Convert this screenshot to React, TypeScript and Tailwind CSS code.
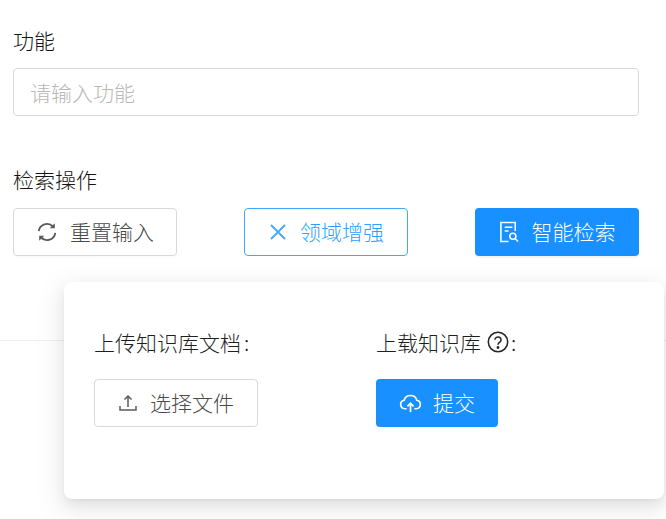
import React from "react";

const font = { fontFamily: '"Noto Sans CJK SC", "Noto Sans", sans-serif' };

function RefreshIcon() {
  return (
    <svg viewBox="0 0 24 24" className="h-[22px] w-[22px]" fill="none" stroke="#595959" strokeWidth="2">
      <path d="M3 11a9 9 0 0 1 15.5-5" />
      <path d="M21 13a9 9 0 0 1-15.5 5" />
      <path d="M20.5 2.5v5.5h-5.5z" fill="#595959" stroke="none" />
      <path d="M3.5 21.5v-5.5h5.5z" fill="#595959" stroke="none" />
    </svg>
  );
}

function CloseIcon() {
  return (
    <svg viewBox="0 0 20 20" className="h-5 w-5" fill="none" stroke="#40a9ff" strokeWidth="1.8">
      <path d="M3 3l14 14M17 3L3 17" />
    </svg>
  );
}

function FileSearchIcon() {
  return (
    <svg viewBox="0 0 22 24" className="h-6 w-[21px]" fill="none" stroke="#fff" strokeWidth="1.6">
      <path d="M10 22H2V2h15v9" />
      <path d="M6 7h8M6 11h4" />
      <circle cx="14.5" cy="16.5" r="3.2" />
      <path d="M17 19l3 3" />
    </svg>
  );
}

function UploadIcon() {
  return (
    <svg viewBox="0 0 20 20" className="h-5 w-5" fill="none" stroke="#595959" strokeWidth="1.5">
      <path d="M10 14V3.5" />
      <path d="M6.5 6.5L10 3l3.5 3.5" />
      <path d="M2 13v4h16v-4" />
    </svg>
  );
}

function CloudIcon() {
  return (
    <svg viewBox="0 0 24 22" className="h-[21px] w-[23px]" fill="none" stroke="#fff" strokeWidth="1.8">
      <path d="M8 16.5H6a4.5 4.5 0 0 1-.7-8.9A7 7 0 0 1 18.7 7.6 4.5 4.5 0 0 1 18 16.5h-2" />
      <path d="M12 20v-9" />
      <path d="M8.8 14L12 10.8l3.2 3.2" />
    </svg>
  );
}

function QuestionIcon() {
  return (
    <svg viewBox="0 0 20 20" className="h-[22px] w-[22px]" fill="none" stroke="#262626" strokeWidth="1.4">
      <circle cx="10" cy="10" r="8.8" />
      <path d="M7.2 8a2.8 2.6 0 1 1 4.3 2.2c-1 .6-1.5 1-1.5 2.2" />
      <circle cx="10" cy="15" r="0.6" fill="#262626" />
    </svg>
  );
}

export default function App() {
  return (
    <div className="relative h-[519px] w-[666px] overflow-hidden bg-white font-light" style={font}>
      <div className="pl-[13px] pr-[27px] pt-[26px]">
        <div className="h-7 text-[21px] leading-7 text-[#141414]">功能</div>
        <div className="mt-[14px] flex h-12 items-center rounded-[4px] border border-[#d9d9d9] px-[16px] pt-[2px] text-[21px] text-[#b8b8b8]">
          请输入功能
        </div>
        <div className="mt-[49px] h-7 text-[21px] leading-7 text-[#141414]">检索操作</div>
        <div className="mt-[15px] flex justify-between">
          <div className="flex h-12 w-[164px] items-center justify-center gap-[12px] rounded-[4px] border border-[#d9d9d9] bg-white text-[21px] text-[#4a4a4a] shadow-[0_2px_0_rgba(0,0,0,0.016)]">
            <RefreshIcon />
            <span>重置输入</span>
          </div>
          <div className="flex h-12 w-[164px] items-center justify-center gap-[12px] rounded-[4px] border border-[#40a9ff] bg-white text-[21px] text-[#2f9fff]">
            <CloseIcon />
            <span>领域增强</span>
          </div>
          <div className="flex h-12 w-[164px] items-center justify-center gap-[12px] rounded-[4px] bg-[#1890ff] text-[21px] text-white shadow-[0_2px_0_rgba(0,0,0,0.045)]">
            <FileSearchIcon />
            <span>智能检索</span>
          </div>
        </div>
      </div>
      <div className="mt-[84px] h-px bg-[#f0f0f0]" />

      <div className="absolute left-[64px] top-[282px] h-[217px] w-[600px] rounded-[8px] bg-white px-[30px] pt-[46px] shadow-[0_3px_6px_-4px_rgba(0,0,0,0.12),0_6px_16px_rgba(0,0,0,0.08),0_9px_28px_8px_rgba(0,0,0,0.05)]">
        <div className="flex">
          <div className="w-[282px]">
            <div className="h-7 text-[21px] leading-7 text-[#1f1f1f]">
              上传知识库文档<span className="ml-[3px]">:</span>
            </div>
            <div className="mt-[23px] flex h-12 w-[164px] items-center justify-center gap-[12px] rounded-[4px] border border-[#d9d9d9] bg-white text-[21px] text-[#4a4a4a]">
              <UploadIcon />
              <span>选择文件</span>
            </div>
          </div>
          <div>
            <div className="flex h-7 items-center text-[21px] leading-7 text-[#1f1f1f]">
              <span>上载知识库</span>
              <span className="ml-[6px] mr-[2px] flex">
                <QuestionIcon />
              </span>
              <span>:</span>
            </div>
            <div className="mt-[23px] flex h-12 w-[122px] items-center justify-center gap-[11px] rounded-[4px] bg-[#1890ff] text-[21px] text-white">
              <CloudIcon />
              <span>提交</span>
            </div>
          </div>
        </div>
      </div>
    </div>
  );
}
